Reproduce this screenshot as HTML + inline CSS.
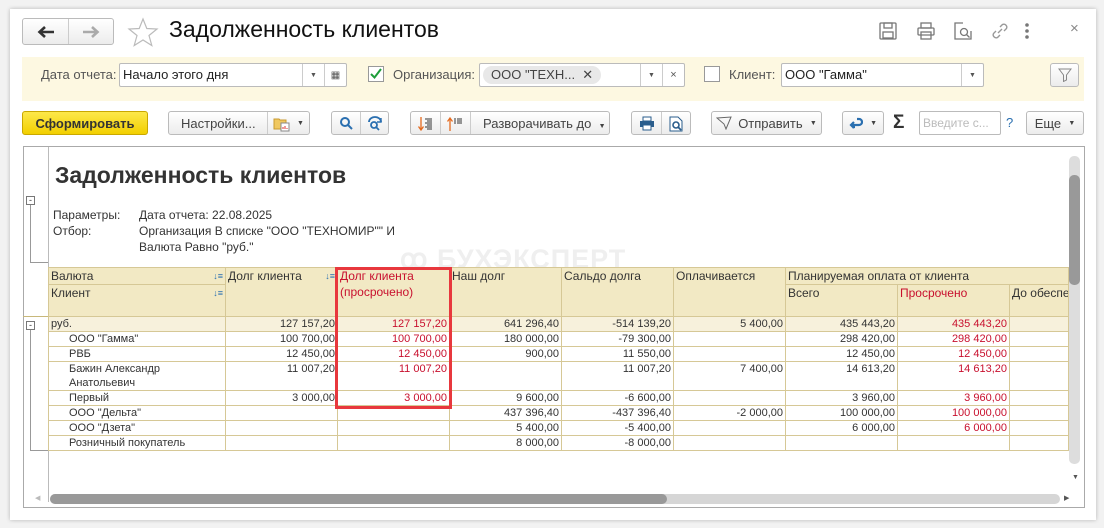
<!DOCTYPE html>
<html><head><meta charset="utf-8">
<style>
*{box-sizing:border-box;margin:0;padding:0}
body{width:1104px;height:528px;background:#f2f2f2;font-family:"Liberation Sans",sans-serif;position:relative;overflow:hidden;color:#333}
.a{position:absolute}
.win{left:10px;top:9px;width:1086px;height:511px;background:#fff;box-shadow:0 0 4px rgba(0,0,0,.25)}
.btn{position:absolute;height:24px;border:1px solid #bbb;border-radius:3px;background:linear-gradient(#fff,#ececec);font-size:13px;color:#444;display:flex;align-items:center;justify-content:center}
.sep{position:absolute;top:0;bottom:0;width:1px;background:#ccc}
.inp{position:absolute;height:24px;border:1px solid #bbb;border-radius:2px;background:#fff;font-size:13px;color:#222;padding:3px 3px}
.lbl{position:absolute;font-size:13px;color:#555}
.dd{position:absolute;top:0;bottom:0;width:22px;border-left:1px solid #ccc;font-size:7px;color:#555;display:flex;align-items:center;justify-content:center}
table{border-collapse:collapse;table-layout:fixed;font-size:11px}
td{border:1px solid #d6c896;padding:0 2px;vertical-align:top;height:15px;line-height:14px;white-space:nowrap;overflow:hidden;color:#333}
td.r{text-align:right}
.h td{background:#f2e9c4;font-size:12px;line-height:16px}
.red{color:#c8102e}
.g td{background:#f7f1dc}
</style></head><body>
<div class="a win"></div>
<!-- nav -->
<div class="btn" style="left:22px;top:18px;width:92px;height:27px">
<svg style="position:absolute;left:14px;top:6px" width="18" height="14" viewBox="0 0 18 14"><path d="M17 7H4M8 2L2.5 7 8 12" stroke="#333" stroke-width="2.6" fill="none"/></svg>
<div class="sep" style="left:45px"></div>
<svg style="position:absolute;left:59px;top:6px" width="18" height="14" viewBox="0 0 18 14"><path d="M1 7h13M10 2l5.5 5L10 12" stroke="#aaa" stroke-width="2.6" fill="none"/></svg></div>
<svg class="a" style="left:127px;top:17px" width="32" height="30" viewBox="0 0 32 30"><path d="M16 2 L19.8 11.5 L30 12 L22 18.5 L24.8 28.5 L16 23 L7.2 28.5 L10 18.5 L2 12 L12.2 11.5 Z" fill="none" stroke="#bbb" stroke-width="1.2"/></svg>
<div class="a" style="left:169px;top:16px;font-size:23px;color:#111">Задолженность клиентов</div>
<!-- top right icons -->
<svg class="a" style="left:878px;top:21px" width="20" height="20" viewBox="0 0 20 20" fill="none" stroke="#777" stroke-width="1.3"><rect x="2" y="2" width="16" height="16" rx="1"/><rect x="6" y="2" width="8" height="5"/><rect x="5" y="11" width="10" height="6"/></svg>
<svg class="a" style="left:916px;top:21px" width="20" height="20" viewBox="0 0 20 20" fill="none" stroke="#777" stroke-width="1.3"><rect x="5" y="2" width="10" height="5"/><rect x="2" y="7" width="16" height="7" rx="1"/><rect x="5" y="11" width="10" height="7"/></svg>
<svg class="a" style="left:953px;top:21px" width="20" height="20" viewBox="0 0 20 20" fill="none" stroke="#777" stroke-width="1.3"><path d="M10 2H2v16h16v-8"/><circle cx="11" cy="11" r="3.5"/><path d="M13.5 13.5l3 3"/></svg>
<svg class="a" style="left:990px;top:21px" width="20" height="20" viewBox="0 0 20 20" fill="none" stroke="#999" stroke-width="1.4"><path d="M8 12l4-4M6 10l-2.5 2.5a3 3 0 004 4L10 14M14 10l2.5-2.5a3 3 0 00-4-4L10 6"/></svg>
<svg class="a" style="left:1024px;top:22px" width="6" height="18"><circle cx="3" cy="3" r="1.8" fill="#777"/><circle cx="3" cy="9" r="1.8" fill="#777"/><circle cx="3" cy="15" r="1.8" fill="#777"/></svg>
<div class="a" style="left:1070px;top:20px;font-size:15px;color:#888">×</div>
<!-- yellow filter bar -->
<div class="a" style="left:22px;top:57px;width:1062px;height:44px;background:#fdf8e1"></div>
<div class="lbl" style="left:41px;top:67px">Дата отчета:</div>
<div class="inp" style="left:119px;top:63px;width:228px">Начало этого дня<div class="dd" style="right:22px">▼</div><div class="dd" style="right:0;font-size:10px">▦</div></div>
<svg class="a" style="left:368px;top:66px" width="16" height="16"><rect x="0.5" y="0.5" width="15" height="15" fill="#fff" stroke="#999"/><path d="M3 8l3.5 3.5L13 3" stroke="#1e9e3a" stroke-width="2" fill="none"/></svg>
<div class="lbl" style="left:393px;top:67px">Организация:</div>
<div class="inp" style="left:479px;top:63px;width:206px"><span style="display:inline-block;background:#e8e8e8;border-radius:9px;padding:1px 8px;font-size:13px;color:#444;margin-top:-1px">ООО "ТЕХН... &nbsp;✕</span><div class="dd" style="right:22px">▼</div><div class="dd" style="right:0;font-size:11px">×</div></div>
<svg class="a" style="left:704px;top:66px" width="16" height="16"><rect x="0.5" y="0.5" width="15" height="15" fill="#fff" stroke="#999"/></svg>
<div class="lbl" style="left:729px;top:67px">Клиент:</div>
<div class="inp" style="left:781px;top:63px;width:203px">ООО "Гамма"<div class="dd" style="right:0">▼</div></div>
<div class="btn" style="left:1050px;top:63px;width:29px;height:24px"><svg width="14" height="14" viewBox="0 0 14 14" fill="none" stroke="#888"><path d="M1 1h12L8.5 7v5l-3 1.5V7z"/></svg></div>
<!-- toolbar -->
<div class="btn" style="left:22px;top:111px;width:126px;background:linear-gradient(#fde84a,#f2cf00);border-color:#c9a800;color:#333;font-weight:bold;font-size:13px">Сформировать</div>
<div class="btn" style="left:168px;top:111px;width:142px;justify-content:flex-start;padding-left:12px">Настройки...<div class="sep" style="left:98px"></div>
<svg style="position:absolute;left:104px;top:4px" width="18" height="16" viewBox="0 0 18 16"><path d="M1 3h5l1 1h6v9H1z" fill="#f0c860" stroke="#c99a30"/><rect x="8" y="7" width="8" height="8" fill="#fff" stroke="#888"/><path d="M10 13v-2M12 13v-3M14 13v-1" stroke="#d33"/></svg>
<span style="position:absolute;left:128px;font-size:7px">▼</span></div>
<div class="btn" style="left:331px;top:111px;width:58px">
<svg style="position:absolute;left:7px;top:4px" width="14" height="14" viewBox="0 0 14 14" fill="none" stroke="#2a6fb0" stroke-width="2"><circle cx="6" cy="6" r="4"/><path d="M9 9l4 4"/></svg>
<div class="sep" style="left:28px"></div>
<svg style="position:absolute;left:35px;top:4px" width="16" height="16" viewBox="0 0 16 16" fill="none" stroke="#2a6fb0" stroke-width="1.8"><path d="M2 6a6 5 0 0112 0"/><path d="M14 2v4h-4" stroke-width="1.4"/><circle cx="7" cy="9" r="3"/><path d="M9 11l3 3"/></svg></div>
<div class="btn" style="left:410px;top:111px;width:200px">
<svg style="position:absolute;left:7px;top:4px" width="16" height="16" viewBox="0 0 16 16"><path d="M3 1v12M0.5 10.5L3 14l2.5-3.5" stroke="#e46a1f" stroke-width="1.3" fill="none"/><path d="M7 3h7M9 5h5M7 7h7M9 9h5M7 11h7M9 13h5" stroke="#333"/></svg>
<div class="sep" style="left:29px"></div>
<svg style="position:absolute;left:36px;top:4px" width="16" height="16" viewBox="0 0 16 16"><path d="M3 15V3M0.5 5.5L3 2l2.5 3.5" stroke="#e46a1f" stroke-width="1.3" fill="none"/><path d="M7 3h2M10 3h5M7 5h2M10 5h5M7 7h2M10 7h5" stroke="#333"/></svg>
<div class="sep" style="left:59px"></div><span style="position:absolute;left:72px">Разворачивать до &nbsp;<span style="font-size:7px">▼</span></span></div>
<div class="btn" style="left:631px;top:111px;width:60px"><svg style="position:absolute;left:7px;top:4px" width="16" height="15" viewBox="0 0 16 15"><rect x="4" y="1" width="8" height="4" fill="#fff" stroke="#2a5d8c"/><rect x="1" y="5" width="14" height="6" fill="#2a5d8c"/><rect x="4" y="9" width="8" height="5" fill="#fff" stroke="#2a5d8c"/></svg><div class="sep" style="left:29px"></div><svg style="position:absolute;left:37px;top:4px" width="15" height="16" viewBox="0 0 15 16"><path d="M1 1h8l4 4v10H1z" fill="#fff" stroke="#2a5d8c"/><circle cx="7" cy="9" r="3" fill="none" stroke="#2a5d8c" stroke-width="1.6"/><path d="M9 11l3 3" stroke="#2a5d8c" stroke-width="1.8"/></svg></div>
<div class="btn" style="left:711px;top:111px;width:111px"><svg style="margin-right:6px" width="16" height="14" viewBox="0 0 16 14" fill="none" stroke="#666"><path d="M1 2l14-1-5 12-2-5z"/></svg>Отправить &nbsp;<span style="font-size:7px">▼</span></div>
<div class="btn" style="left:842px;top:111px;width:42px"><svg width="14" height="12" viewBox="0 0 14 12" fill="none" stroke="#2a6fb0" stroke-width="2.2"><path d="M6 10H3M8 2h2a3 3 0 010 6H3M5 5L2 8l3 3"/></svg>&nbsp;&nbsp;<span style="font-size:7px">▼</span></div>
<div class="a" style="left:893px;top:112px;font-size:19px;font-weight:bold;color:#333">Σ</div>
<div class="inp" style="left:919px;top:111px;width:82px;color:#bbb;font-size:12px;padding-top:4px">Введите с...</div>
<div class="a" style="left:1006px;top:115px;font-size:13px;color:#2a6fb0">?</div>
<div class="btn" style="left:1026px;top:111px;width:58px">Еще &nbsp;<span style="font-size:7px">▼</span></div>
<!-- report area -->
<div class="a" style="left:23px;top:146px;width:1062px;height:362px;border:1px solid #aaa;background:#fff"></div>
<div class="a" style="left:48px;top:147px;width:1px;height:355px;background:#bbb"></div>
<div class="a" style="left:26px;top:196px;width:9px;height:9px;border:1px solid #777;font-size:9px;line-height:6px;text-align:center">-</div>
<div class="a" style="left:30px;top:205px;width:1px;height:58px;background:#999"></div>
<div class="a" style="left:30px;top:262px;width:18px;height:1px;background:#999"></div>
<div class="a" style="left:55px;top:162px;font-size:23px;font-weight:bold;color:#333">Задолженность клиентов</div>
<div class="a" style="left:53px;top:207px;font-size:12px;line-height:16px;color:#333">Параметры:<br>Отбор:</div>
<div class="a" style="left:139px;top:207px;font-size:12px;line-height:16px;color:#333">Дата отчета: 22.08.2025<br>Организация В списке "ООО "ТЕХНОМИР"" И<br>Валюта Равно "руб."</div>
<div class="a" style="left:400px;top:244px;font-size:27px;font-weight:bold;color:#efefef;letter-spacing:1px">ꝏ БУХЭКСПЕРТ</div>
<!-- table -->
<div class="a" style="left:26px;top:321px;width:9px;height:9px;border:1px solid #777;font-size:9px;line-height:6px;text-align:center;background:#fff">-</div>
<div class="a" style="left:30px;top:330px;width:1px;height:120px;background:#999"></div>
<div class="a" style="left:30px;top:450px;width:18px;height:1px;background:#999"></div>
<div class="a" style="left:23px;top:316px;width:1045px;height:1px;background:#c8b87a"></div>
<table class="a" style="left:48px;top:267px;width:1020px">
<colgroup><col style="width:177px"><col style="width:112px"><col style="width:112px"><col style="width:112px"><col style="width:112px"><col style="width:112px"><col style="width:112px"><col style="width:112px"><col style="width:59px"></colgroup>
<tr class="h"><td style="height:17px">Валюта<span style="float:right;font-size:9px;color:#2a6fb0">↓≡</span></td><td rowspan="2">Долг клиента<span style="float:right;font-size:9px;color:#2a6fb0">↓≡</span></td><td rowspan="2" class="red" style="white-space:normal">Долг клиента (просрочено)</td><td rowspan="2">Наш долг</td><td rowspan="2">Сальдо долга</td><td rowspan="2">Оплачивается</td><td colspan="3">Планируемая оплата от клиента</td></tr>
<tr class="h"><td style="height:32px">Клиент<span style="float:right;font-size:9px;color:#2a6fb0">↓≡</span></td><td>Всего</td><td class="red">Просрочено</td><td>До обеспечения</td></tr>
<tr class="g"><td>руб.</td><td class="r">127 157,20</td><td class="r red">127 157,20</td><td class="r">641 296,40</td><td class="r">-514 139,20</td><td class="r">5 400,00</td><td class="r">435 443,20</td><td class="r red">435 443,20</td><td></td></tr>
<tr><td style="padding-left:20px">ООО "Гамма"</td><td class="r">100 700,00</td><td class="r red">100 700,00</td><td class="r">180 000,00</td><td class="r">-79 300,00</td><td></td><td class="r">298 420,00</td><td class="r red">298 420,00</td><td></td></tr>
<tr><td style="padding-left:20px">РВБ</td><td class="r">12 450,00</td><td class="r red">12 450,00</td><td class="r">900,00</td><td class="r">11 550,00</td><td></td><td class="r">12 450,00</td><td class="r red">12 450,00</td><td></td></tr>
<tr><td style="padding-left:20px;height:29px">Бажин Александр<br>Анатольевич</td><td class="r">11 007,20</td><td class="r red">11 007,20</td><td></td><td class="r">11 007,20</td><td class="r">7 400,00</td><td class="r">14 613,20</td><td class="r red">14 613,20</td><td></td></tr>
<tr><td style="padding-left:20px">Первый</td><td class="r">3 000,00</td><td class="r red">3 000,00</td><td class="r">9 600,00</td><td class="r">-6 600,00</td><td></td><td class="r">3 960,00</td><td class="r red">3 960,00</td><td></td></tr>
<tr><td style="padding-left:20px">ООО "Дельта"</td><td></td><td></td><td class="r">437 396,40</td><td class="r">-437 396,40</td><td class="r">-2 000,00</td><td class="r">100 000,00</td><td class="r red">100 000,00</td><td></td></tr>
<tr><td style="padding-left:20px">ООО "Дзета"</td><td></td><td></td><td class="r">5 400,00</td><td class="r">-5 400,00</td><td></td><td class="r">6 000,00</td><td class="r red">6 000,00</td><td></td></tr>
<tr><td style="padding-left:20px">Розничный покупатель</td><td></td><td></td><td class="r">8 000,00</td><td class="r">-8 000,00</td><td></td><td></td><td></td><td></td></tr>
</table>
<div class="a" style="left:335px;top:267px;width:117px;height:142px;border:3px solid #e8383d"></div>
<!-- scrollbars -->
<div class="a" style="left:1069px;top:156px;width:11px;height:308px;background:#ddd;border-radius:5px"></div>
<div class="a" style="left:1069px;top:175px;width:11px;height:110px;background:#999;border-radius:5px"></div>
<div class="a" style="left:1072px;top:474px;font-size:7px;color:#555">▼</div>
<div class="a" style="left:50px;top:494px;width:1010px;height:10px;background:#d6d6d6;border-radius:5px"></div>
<div class="a" style="left:50px;top:494px;width:617px;height:10px;background:#999;border-radius:5px"></div>
<div class="a" style="left:35px;top:494px;font-size:7px;color:#bbb">◀</div>
<div class="a" style="left:1064px;top:494px;font-size:7px;color:#555">▶</div>
</body></html>
